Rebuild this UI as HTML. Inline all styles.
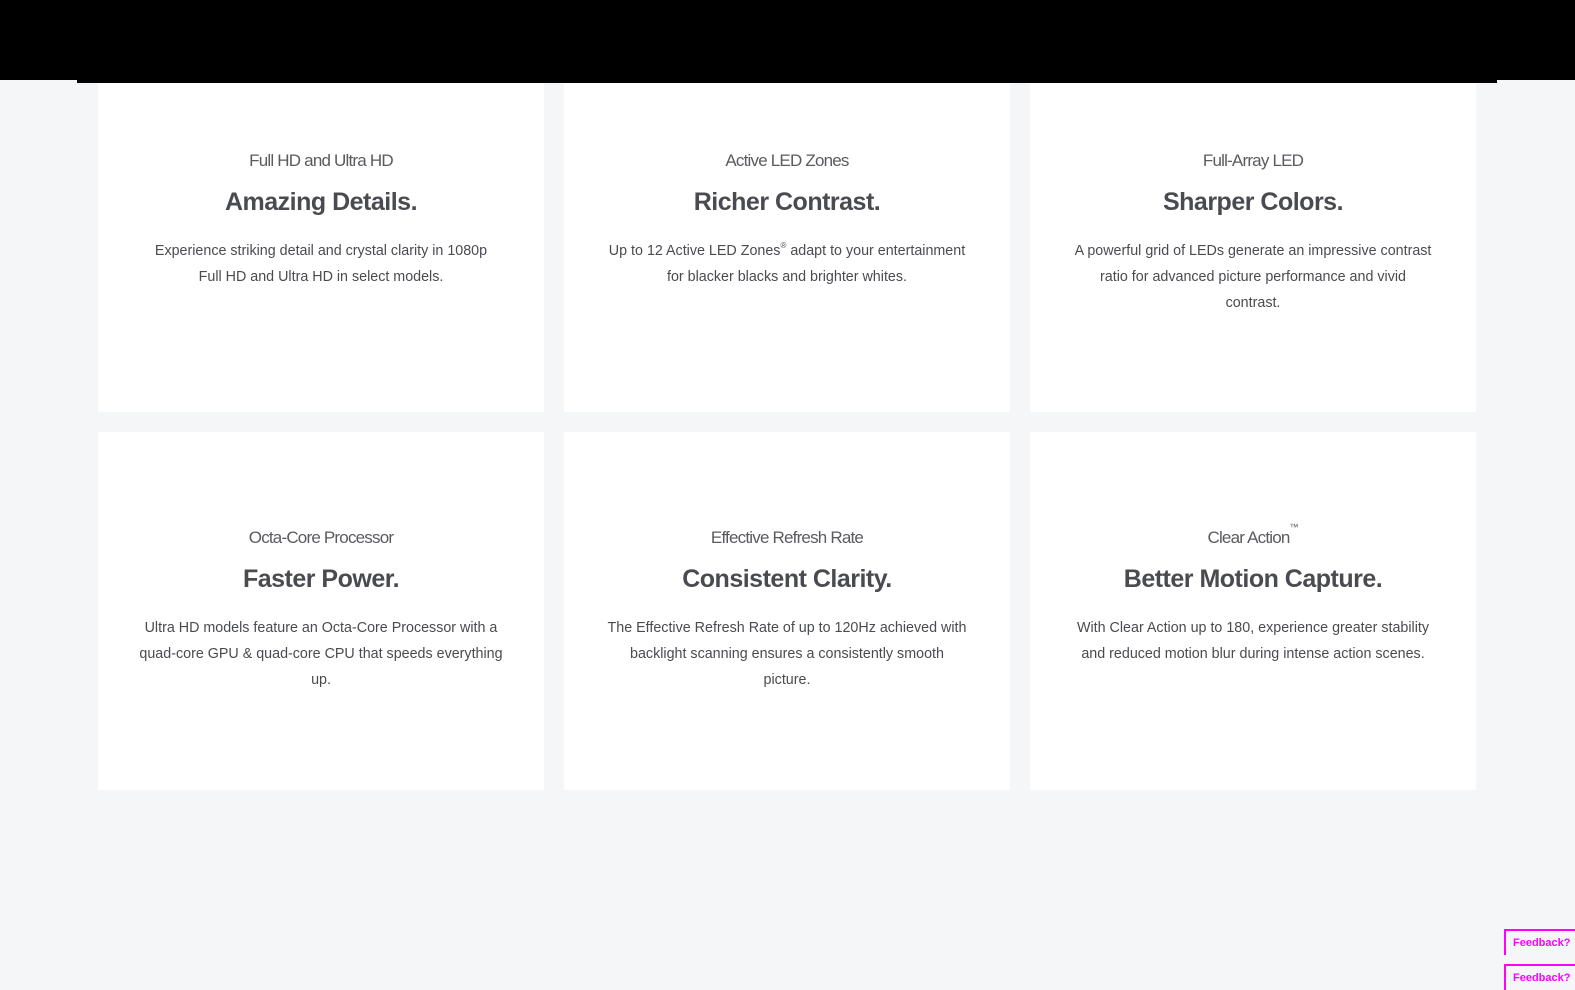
<!DOCTYPE html>
<html><head><style>
body{margin:0;width:1575px;height:990px;background:#f5f6f8;position:relative;overflow:hidden;font-family:"Liberation Sans",sans-serif;}
.top{position:absolute;left:0;top:0;width:1575px;height:80px;background:#000}
.top2{position:absolute;left:77px;top:0;width:1420px;height:83px;background:#000}
.card{position:absolute;background:#fff;width:446px;text-align:center;box-sizing:border-box;padding:0 10px}
.sub{font-size:17px;color:#5a5b60;letter-spacing:-0.8px;line-height:20px;margin-top:2px}
.h{font-size:25px;font-weight:bold;color:#4a4b50;letter-spacing:-0.5px;margin-top:16px;line-height:30px}
.p{font-size:14.3px;color:#4a4b50;line-height:26px;margin-top:21px;white-space:nowrap}
sup{line-height:0;font-size:8px;position:relative;top:-1px}
.fb{position:absolute;left:1504px;width:80px;height:26px;border-top:2px solid #f0f;border-left:2px solid #f0f;color:#f0f;font-size:11px;font-weight:bold;box-sizing:border-box;padding:6px 0 0 7px}
</style></head><body>
<div class="top"></div><div class="top2"></div>
<div class="card" style="left:98px;top:83px;height:329px;padding-top:66px"><div class="sub">Full HD and Ultra HD</div><div class="h">Amazing Details.</div><div class="p">Experience striking detail and crystal clarity in 1080p<br>Full HD and Ultra HD in select models.</div></div>
<div class="card" style="left:564px;top:83px;height:329px;padding-top:66px"><div class="sub">Active LED Zones</div><div class="h">Richer Contrast.</div><div class="p">Up to 12 Active LED Zones<sup>®</sup> adapt to your entertainment<br>for blacker blacks and brighter whites.</div></div>
<div class="card" style="left:1030px;top:83px;height:329px;padding-top:66px"><div class="sub">Full-Array LED</div><div class="h">Sharper Colors.</div><div class="p">A powerful grid of LEDs generate an impressive contrast<br>ratio for advanced picture performance and vivid<br>contrast.</div></div>
<div class="card" style="left:98px;top:432px;height:358px;padding-top:94px"><div class="sub">Octa-Core Processor</div><div class="h">Faster Power.</div><div class="p">Ultra HD models feature an Octa-Core Processor with a<br>quad-core GPU &amp; quad-core CPU that speeds everything<br>up.</div></div>
<div class="card" style="left:564px;top:432px;height:358px;padding-top:94px"><div class="sub">Effective Refresh Rate</div><div class="h">Consistent Clarity.</div><div class="p">The Effective Refresh Rate of up to 120Hz achieved with<br>backlight scanning ensures a consistently smooth<br>picture.</div></div>
<div class="card" style="left:1030px;top:432px;height:358px;padding-top:94px"><div class="sub">Clear Action<sup style="font-size:9px;top:-6px;letter-spacing:0">™</sup></div><div class="h">Better Motion Capture.</div><div class="p">With Clear Action up to 180, experience greater stability<br>and reduced motion blur during intense action scenes.</div></div>
<div class="fb" style="top:929px">Feedback?</div>
<div class="fb" style="top:964px">Feedback?</div>
</body></html>
